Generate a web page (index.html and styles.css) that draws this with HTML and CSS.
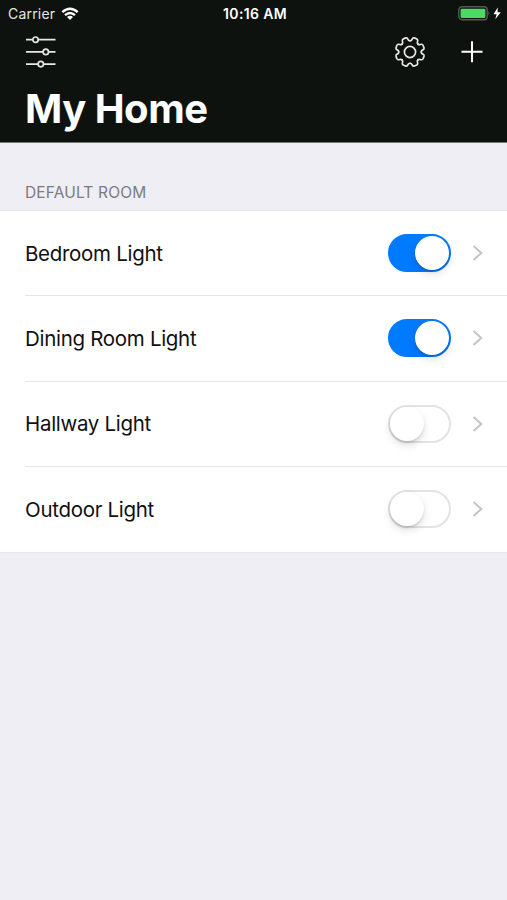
FILE: index.html
```html
<!DOCTYPE html>
<html lang="en">
<head>
  <meta charset="UTF-8">
  <title>My Home</title>
  <link rel="stylesheet" href="styles.css">
</head>
<body>
  <header>
    <div class="status-bar">
      <div class="carrier">
        <span>Carrier</span>
        <svg width="18" height="14" viewBox="0 0 18 14" fill="none" stroke="#fff" stroke-width="2.4">
          <path d="M1.3 5.1 Q9 -1.7 16.7 5.1"/>
          <path d="M4 8.1 Q9 3.7 14 8.1"/>
          <path d="M9 12.9 L6 9.9 Q9 7.4 12 9.9 Z" fill="#fff" stroke="none"/>
        </svg>
      </div>
      <div class="time">10:16 AM</div>
      <div class="battery">
        <svg width="44" height="16" viewBox="0 0 44 16">
          <rect x="0.8" y="0.8" width="28.4" height="13" rx="3.2" fill="none" stroke="#55595a" stroke-width="1.4"/>
          <rect x="2.6" y="2.7" width="24.8" height="9.2" rx="1.2" fill="#4cd964"/>
          <path d="M30.4 5.1 Q32.3 7.3 30.4 9.5 Z" fill="#55595a"/>
          <path d="M39.7 1.5 L35.5 8.2 H38.6 L37.3 13.2 L42.8 6.2 H39.6 Z" fill="#fff"/>
        </svg>
      </div>
    </div>

    <div class="toolbar">
      <svg width="30" height="32" viewBox="0 0 30 32" fill="none" stroke="#e6e8e6" stroke-width="1.7">
        <path d="M0 3.7 H6.7 M12.3 3.7 H29.5 M0 15.9 H17 M22.6 15.9 H29.5 M0 28.1 H12 M17.6 28.1 H29.5"/>
        <circle cx="9.5" cy="3.7" r="2.7"/>
        <circle cx="19.8" cy="15.9" r="2.7"/>
        <circle cx="14.8" cy="28.1" r="2.7"/>
      </svg>
      <div class="actions">
        <svg width="32" height="32" viewBox="-16 -16 32 32" fill="none" stroke="#e6e8e6" stroke-width="1.7" stroke-linecap="round">
          <defs>
            <path id="tooth" d="M-4.3 -10.4 Q-3 -10.9 -3 -12.2 Q-3 -14.2 -1.7 -14.5 Q0 -14.8 1.7 -14.5 Q3 -14.2 3 -12.2 Q3 -10.9 4.3 -10.4"/>
          </defs>
          <circle r="5.6"/>
          <use href="#tooth" transform="rotate(22.5)"/>
          <use href="#tooth" transform="rotate(67.5)"/>
          <use href="#tooth" transform="rotate(112.5)"/>
          <use href="#tooth" transform="rotate(157.5)"/>
          <use href="#tooth" transform="rotate(202.5)"/>
          <use href="#tooth" transform="rotate(247.5)"/>
          <use href="#tooth" transform="rotate(292.5)"/>
          <use href="#tooth" transform="rotate(337.5)"/>
        </svg>
        <svg width="22" height="22" viewBox="0 0 22 22" stroke="#fff" stroke-width="2">
          <path d="M0.5 10.8 H21.5 M11 0.3 V21.3"/>
        </svg>
      </div>
    </div>

    <h1>My Home</h1>
  </header>

  <h2>DEFAULT ROOM</h2>
  <ul class="lights">
    <li>
      <span class="name">Bedroom Light</span>
      <span class="switch on"></span>
      <svg class="chevron" width="12" height="18" viewBox="0 0 12 18"><path d="M1.5 2 L9.3 9 L1.5 16"/></svg>
    </li>
    <li>
      <span class="name">Dining Room Light</span>
      <span class="switch on"></span>
      <svg class="chevron" width="12" height="18" viewBox="0 0 12 18"><path d="M1.5 2 L9.3 9 L1.5 16"/></svg>
    </li>
    <li>
      <span class="name">Hallway Light</span>
      <span class="switch"></span>
      <svg class="chevron" width="12" height="18" viewBox="0 0 12 18"><path d="M1.5 2 L9.3 9 L1.5 16"/></svg>
    </li>
    <li>
      <span class="name">Outdoor Light</span>
      <span class="switch"></span>
      <svg class="chevron" width="12" height="18" viewBox="0 0 12 18"><path d="M1.5 2 L9.3 9 L1.5 16"/></svg>
    </li>
  </ul>
</body>
</html>
```
FILE: styles.css
```css
:root {
  --header-color: #0d120f;
  --background-color: #efeef4;
  --line-color: #e6e6e9;
  --tint-color: #007aff;
}
* {
  box-sizing: border-box;
}
body {
  margin: 0;
  min-height: 100vh;
  font-family: Inter, "Liberation Sans", sans-serif;
  background: var(--background-color);
  color: #111;
}
svg {
  display: block;
}
header {
  height: 143px;
  background: var(--header-color);
  border-bottom: 1px solid #777a79;
  color: #fff;
}
.status-bar {
  display: grid;
  grid-template-columns: 1fr auto 1fr;
  align-items: center;
  height: 27px;
  padding: 0 5px 0 8px;
  font-size: 14px;
}
.carrier {
  display: flex;
  align-items: center;
  gap: 6px;
  letter-spacing: 0.2px;
  color: #e4e6e5;
}
.time {
  font-weight: 600;
  font-size: 14px;
  letter-spacing: 0.35px;
}
.battery {
  justify-self: end;
}
.toolbar {
  display: flex;
  align-items: center;
  justify-content: space-between;
  height: 50px;
  padding: 0 24px 0 26px;
}
.actions {
  display: flex;
  align-items: center;
  gap: 35px;
}
h1 {
  margin: 7px 0 0 25px;
  font-size: 40px;
  line-height: 50px;
  font-weight: 700;
  letter-spacing: -0.5px;
}
h2 {
  margin: 0;
  height: 67px;
  padding: 40px 0 0 25px;
  font-size: 15.5px;
  line-height: 20px;
  font-weight: 400;
  letter-spacing: 0.15px;
  color: #7b7b80;
}
.lights {
  margin: 0;
  padding: 0 0 0 25px;
  list-style: none;
  background: #fff;
  border-top: 1px solid var(--line-color);
  border-bottom: 1px solid var(--line-color);
}
.lights li {
  display: flex;
  align-items: center;
  height: 85.5px;
  padding-right: 23px;
}
.lights li:first-child {
  height: 84px;
}
.lights li + li {
  border-top: 1px solid var(--line-color);
}
.name {
  flex: 1;
  font-size: 20.5px;
  letter-spacing: -0.3px;
}
.switch {
  width: 63px;
  height: 38px;
  border: 2px solid #e3e3e3;
  border-radius: 19px;
}
.switch::before {
  content: "";
  display: block;
  width: 34px;
  height: 34px;
  border-radius: 50%;
  background: #fff;
  box-shadow: 0 4px 9px rgba(0,0,0,0.13), 0 2px 2px rgba(0,0,0,0.1);
}
.switch.on {
  border-color: var(--tint-color);
  background: var(--tint-color);
}
.switch.on::before {
  margin-left: 25px;
}
.chevron {
  margin-left: 21px;
  fill: none;
  stroke: #c4c4c7;
  stroke-width: 2;
}
```
